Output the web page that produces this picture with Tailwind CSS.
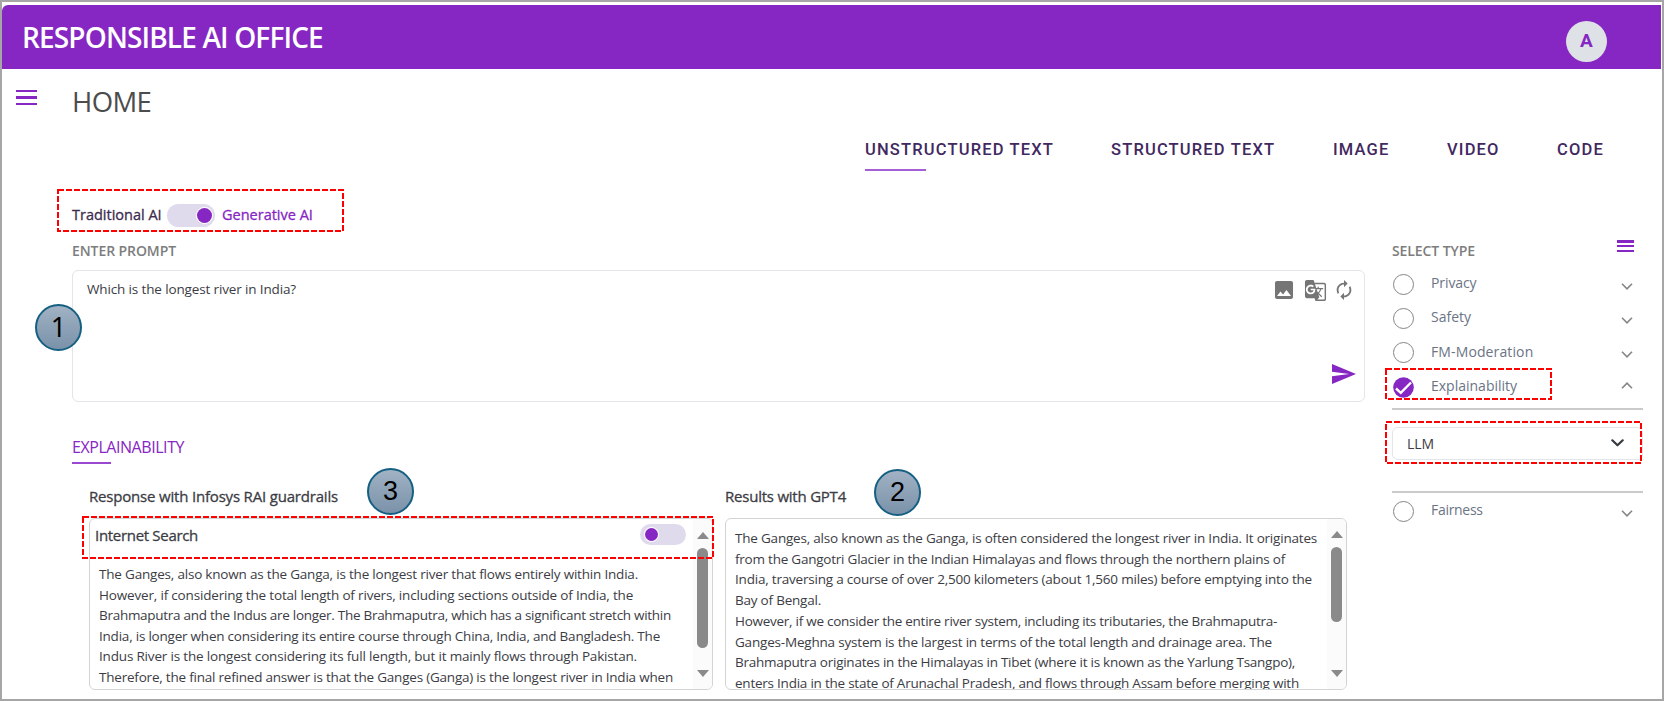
<!DOCTYPE html>
<html lang="en">
<head>
<meta charset="utf-8">
<title>Responsible AI Office</title>
<script src="https://cdn.jsdelivr.net/npm/@tailwindcss/browser@4"></script>
</head>
<body class="bg-white">
<div class="relative w-[1664px] h-[701px] overflow-hidden bg-white font-['Open_Sans',sans-serif] text-[#3c3c44] whitespace-nowrap">

  <div class="h-[5px]"></div>
  <header class="ml-[2px] mr-[3px] h-16 bg-[#8626c3] flex items-center justify-between rounded-tl-md pl-[20px] pr-[54px]">
    <h1 class="text-[28px] leading-8 font-semibold text-white tracking-[-0.85px]">RESPONSIBLE AI OFFICE</h1>
    <div class="size-[41px] mt-2 rounded-full bg-[#dee2e6] flex items-center justify-center font-[Roboto,sans-serif] font-bold text-[19px] text-[#8626c3]">A</div>
  </header>

  <div class="mt-[11px] h-10 flex items-center pl-4">
    <div class="w-[21px] -mt-[5px] flex flex-col gap-1">
      <span class="h-[2.5px] bg-[#8626c3]"></span><span class="h-[2.5px] bg-[#8626c3]"></span><span class="h-[2.5px] bg-[#8626c3]"></span>
    </div>
    <h2 class="ml-[35px] mt-[3px] text-[27.5px] leading-10 text-[#4c4c4c] font-normal tracking-[-0.6px]">HOME</h2>
  </div>

  <nav class="pt-[18px] h-[51px] pl-[865px] flex items-start font-[Roboto,sans-serif] font-medium text-[16.5px] leading-6 text-[#41285f] tracking-[1.17px]">
    <div class="w-[246px]">UNSTRUCTURED TEXT<div class="mt-[7px] w-[61px] h-[2px] bg-[#a45fd6]"></div></div>
    <div class="w-[222px]">STRUCTURED TEXT</div>
    <div class="w-[114px]">IMAGE</div>
    <div class="w-[110px]">VIDEO</div>
    <div>CODE</div>
  </nav>

  <div class="mt-8 h-6 flex items-center pl-[72px] text-[14.5px] [-webkit-text-stroke:0.3px]">
    <span class="w-[95px] text-[#3b2b4d]">Traditional AI</span>
    <span class="w-12 h-[23px] rounded-full bg-[#dfdbec] flex items-center justify-end pr-[3.5px]"><span class="size-[15px] rounded-full bg-[#8626c3] ring-1 ring-white"></span></span>
    <span class="ml-[7px] text-[#8626c3]">Generative AI</span>
  </div>

  <div class="flex pl-[72px]">
    <main class="w-[1293px]">
      <div class="mt-[14px] h-5 leading-5 text-[14px] font-semibold text-[#7d7d7d] tracking-[-0.09px]">ENTER PROMPT</div>
      <section class="mt-[9px] h-[132px] border-[1.5px] border-[#e2e5ea] rounded-md flex justify-between pl-[14px] pr-2">
        <p class="mt-2 leading-5 text-[13.5px] tracking-[-0.137px]">Which is the longest river in India?</p>
        <div class="flex flex-col items-end justify-between pt-[7px] pb-[17px]">
          <div class="flex items-center text-[#757575]">
            <svg class="size-[24px]" viewBox="0 0 24 24" fill="currentColor"><path d="M21 19V5c0-1.100-.9-2-2-2H5c-1.100 0-2 .9-2 2v14c0 1.100.9 2 2 2h14c1.100 0 2-.9 2-2zM8.500 13.500l2.500 3.010L14.500 12l4.500 6H5l3.500-4.500z"/></svg>
            <svg class="ml-2 size-[23px]" viewBox="0 0 24 24" fill="currentColor"><path d="M21 4H11l-1-3H3c-1.100 0-2 .9-2 2v15c0 1.100.9 2 2 2h8l1 3h9c1.100 0 2-.9 2-2V6c0-1.100-.9-2-2-2zM7 16c-2.760 0-5-2.240-5-5s2.240-5 5-5c1.350 0 2.480.5 3.350 1.300L9.030 8.570c-.38-.36-1.040-.78-2.030-.78-1.740 0-3.150 1.440-3.150 3.210S5.260 14.210 7 14.210c2.010 0 2.840-1.440 2.920-2.410H7v-1.710h4.680c.07.310.12.610.12 1.020C11.800 13.970 9.890 16 7 16zm6.170-5.420h3.700c-.43 1.250-1.110 2.430-2.050 3.470-.31-.35-.6-.72-.86-1.100l-.79-2.370zm8.330 9.920c0 .55-.45 1-1 1H14l2-2.500-1.040-3.100 3.100 3.100.92-.92-3.300-3.250.02-.02c1.130-1.250 1.930-2.690 2.400-4.220H20v-1.300h-4.530V8h-1.290v1.290h-1.440L11.460 5.500h9.040c.55 0 1 .45 1 1v14z"/></svg>
            <svg class="ml-[6px] mr-px size-[22px]" viewBox="0 0 24 24" fill="currentColor"><path d="M12 6v3l4-4-4-4v3c-4.420 0-8 3.580-8 8 0 1.570.46 3.030 1.240 4.260L6.700 14.800c-.45-.83-.7-1.790-.7-2.800 0-3.310 2.690-6 6-6zm6.760 1.740L17.300 9.200c.44.84.7 1.790.7 2.800 0 3.310-2.690 6-6 6v-3l-4 4 4 4v-3c4.420 0 8-3.580 8-8 0-1.570-.46-3.030-1.240-4.260z"/></svg>
          </div>
          <svg class="w-[24px] h-[20px]" viewBox="2 3 21 18" preserveAspectRatio="none" fill="#8626c3"><path d="M2.010 21L23 12 2.010 3 2 10l15 2-15 2z"/></svg>
        </div>
      </section>

      <h3 class="mt-[33px] leading-6 text-[16px] text-[#8626c3] tracking-[-0.446px]">EXPLAINABILITY</h3>
      <div class="mt-[3px] w-[39px] h-[2px] bg-[#9a48cf]"></div>

      <div class="mt-5 flex">
        <section class="ml-[17px] w-[624px] shrink-0">
          <h4 class="leading-6 text-[15px] [-webkit-text-stroke:0.3px] tracking-[-0.187px]">Response with Infosys RAI guardrails</h4>
          <div class="mt-[10px] h-[172px] border-[1.5px] border-[#d3d3d3] rounded-md flex justify-between overflow-hidden">
            <div class="pl-1">
              <div class="pt-1 flex items-start w-[592px] justify-between">
                <span class="pl-[1px] leading-6 text-[15px] [-webkit-text-stroke:0.3px] tracking-[-0.31px]">Internet Search</span>
                <span class="mt-[1px] w-[46px] h-[21px] rounded-full bg-[#dfdbec] flex items-center pl-[5px]"><span class="size-[13px] rounded-full bg-[#8626c3] ring-1 ring-white"></span></span>
              </div>
              <div class="mt-[17px] pl-[5px] text-[13.5px] leading-[20.6px]">
                <p class="tracking-[-0.197px]">The Ganges, also known as the Ganga, is the longest river that flows entirely within India.</p>
                <p class="tracking-[-0.174px]">However, if considering the total length of rivers, including sections outside of India, the</p>
                <p class="tracking-[-0.283px]">Brahmaputra and the Indus are longer. The Brahmaputra, which has a significant stretch within</p>
                <p class="tracking-[-0.218px]">India, is longer when considering its entire course through China, India, and Bangladesh. The</p>
                <p class="tracking-[-0.177px]">Indus River is the longest considering its full length, but it mainly flows through Pakistan.</p>
                <p class="tracking-[-0.212px]">Therefore, the final refined answer is that the Ganges (Ganga) is the longest river in India when</p>
              </div>
            </div>
            <div class="w-[19px] shrink-0 bg-[#fbfbfb] flex flex-col items-center pt-[13px] pb-[12px]">
              <svg class="w-3 h-[7px]" viewBox="0 0 12 7" fill="#8a8a8a"><path d="M6 0L12 7H0z"/></svg>
              <span class="mt-[9px] w-[11px] h-[100px] rounded-full bg-[#8a8a8a]"></span>
              <svg class="mt-auto w-3 h-[7px]" viewBox="0 0 12 7" fill="#8a8a8a"><path d="M0 0H12L6 7z"/></svg>
            </div>
          </div>
        </section>

        <section class="ml-3 w-[622px] shrink-0">
          <h4 class="leading-6 text-[15px] [-webkit-text-stroke:0.3px] tracking-[-0.225px]">Results with GPT4</h4>
          <div class="mt-[10px] h-[172px] border-[1.5px] border-[#d3d3d3] rounded-md flex justify-between overflow-hidden">
            <div class="pl-[9px] pt-[9px] text-[13.5px] leading-[20.7px]">
                <p class="tracking-[-0.204px]">The Ganges, also known as the Ganga, is often considered the longest river in India. It originates</p>
                <p class="tracking-[-0.227px]">from the Gangotri Glacier in the Indian Himalayas and flows through the northern plains of</p>
                <p class="tracking-[-0.206px]">India, traversing a course of over 2,500 kilometers (about 1,560 miles) before emptying into the</p>
                <p class="tracking-[-0.217px]">Bay of Bengal.</p>
                <p class="tracking-[-0.265px]">However, if we consider the entire river system, including its tributaries, the Brahmaputra-</p>
                <p class="tracking-[-0.192px]">Ganges-Meghna system is the largest in terms of the total length and drainage area. The</p>
                <p class="tracking-[-0.254px]">Brahmaputra originates in the Himalayas in Tibet (where it is known as the Yarlung Tsangpo),</p>
                <p class="tracking-[-0.233px]">enters India in the state of Arunachal Pradesh, and flows through Assam before merging with</p>
            </div>
            <div class="w-[19px] shrink-0 bg-[#fbfbfb] flex flex-col items-center pt-[12px] pb-[12px]">
              <svg class="w-3 h-[7px]" viewBox="0 0 12 7" fill="#8a8a8a"><path d="M6 0L12 7H0z"/></svg>
              <span class="mt-[9px] w-[11px] h-[75px] rounded-full bg-[#8a8a8a]"></span>
              <svg class="mt-auto w-3 h-[7px]" viewBox="0 0 12 7" fill="#8a8a8a"><path d="M0 0H12L6 7z"/></svg>
            </div>
          </div>
        </section>
      </div>
    </main>

    <aside class="ml-[27px] w-[251px] text-[14px] text-[#6b7485]">
      <div class="mt-[14px] h-5 flex justify-between font-semibold text-[#7d7d7d] leading-5">
        <span class="tracking-[-0.088px]">SELECT TYPE</span>
        <div class="mr-[9px] -mt-[1px] w-[17px] flex flex-col gap-[2.5px]"><span class="h-[2.500px] bg-[#8626c3]"></span><span class="h-[2px] bg-[#8626c3]"></span><span class="h-[2.500px] bg-[#8626c3]"></span></div>
      </div>
      <div class="mt-[6px] h-[34.400px] flex items-center"><span class="ml-px size-[21px] rounded-full border-[1.5px] border-[#858585]"></span><span class="ml-[17px] -mt-1 tracking-[-0.1px]">Privacy</span><svg class="ml-auto mr-[10px] mt-1 w-3 h-[7px]" viewBox="0 0 12 7" fill="none" stroke="#858585" stroke-width="1.600"><path d="M1 .8l5 5 5-5"/></svg></div>
      <div class="h-[34.400px] flex items-center"><span class="ml-px size-[21px] rounded-full border-[1.5px] border-[#858585]"></span><span class="ml-[17px] -mt-1">Safety</span><svg class="ml-auto mr-[10px] mt-1 w-3 h-[7px]" viewBox="0 0 12 7" fill="none" stroke="#858585" stroke-width="1.600"><path d="M1 .8l5 5 5-5"/></svg></div>
      <div class="h-[34.400px] flex items-center"><span class="ml-px size-[21px] rounded-full border-[1.5px] border-[#858585]"></span><span class="ml-[17px] -mt-[3px] tracking-[0.12px]">FM-Moderation</span><svg class="ml-auto mr-[10px] mt-1 w-3 h-[7px]" viewBox="0 0 12 7" fill="none" stroke="#858585" stroke-width="1.600"><path d="M1 .8l5 5 5-5"/></svg></div>
      <div class="h-[34.400px] flex items-center"><svg class="ml-px size-[21px]" viewBox="0 0 21 21"><circle cx="10.5" cy="10.5" r="10.300" fill="#8626c3"/><path d="M3 11.500l4.800 4.300L18 5.500" fill="none" stroke="#fff" stroke-width="2.400"/></svg><span class="ml-[17px] -mt-[3px]">Explainability</span><svg class="ml-auto mr-[10px] -mt-1 w-3 h-[7px]" viewBox="0 0 12 7" fill="none" stroke="#858585" stroke-width="1.600"><path d="M1 6.200l5-5 5 5"/></svg></div>
      <div class="mt-[3px] border-t-2 border-[#cacaca]"></div>
      <div class="mt-[17px] h-[33px] border border-[#e2e5ea] rounded-md flex items-center justify-between pl-[14px] pr-[18px] text-[#3c3c44]"><span>LLM</span><svg class="-mt-px w-[13px] h-[8px]" viewBox="0 0 13 8" fill="none" stroke="#343a40" stroke-width="2.200" stroke-linecap="round" stroke-linejoin="round"><path d="M1.300 1.300l5.200 5 5.200-5"/></svg></div>
      <div class="mt-[31px] border-t-2 border-[#cacaca]"></div>
      <div class="mt-[2px] h-[34.400px] flex items-center"><span class="ml-px size-[21px] rounded-full border-[1.5px] border-[#858585]"></span><span class="ml-[17px] -mt-1 tracking-[-0.3px]">Fairness</span><svg class="ml-auto mr-[10px] mt-1 w-3 h-[7px]" viewBox="0 0 12 7" fill="none" stroke="#858585" stroke-width="1.600"><path d="M1 .8l5 5 5-5"/></svg></div>
    </aside>
  </div>

  <!-- window frame -->
  <div class="absolute inset-0 border-2 border-[#a6a6a6]"></div>

  <!-- dashed highlights -->
  <svg class="absolute inset-0" width="1664" height="701" fill="none" stroke="#fe0000" stroke-width="2" stroke-dasharray="6 2">
    <rect x="58" y="190" width="285" height="41"/>
    <rect x="1386" y="369" width="165" height="30"/>
    <rect x="1386" y="422" width="255" height="41"/>
    <rect x="83" y="517" width="630" height="41"/>
  </svg>

  <!-- numbered callouts -->
  <div class="absolute left-[35px] top-[304px] size-[47px] rounded-full border-2 border-[#156082] bg-linear-to-b from-[#a1b2c4] to-[#7a92a9] flex items-center justify-center font-['Noto_Sans',sans-serif] text-[27px] text-black">1</div>
  <div class="absolute left-[367px] top-[468px] size-[47px] rounded-full border-2 border-[#156082] bg-linear-to-b from-[#a1b2c4] to-[#7a92a9] flex items-center justify-center font-['Liberation_Sans',sans-serif] text-[27px] text-black">3</div>
  <div class="absolute left-[874px] top-[469px] size-[47px] rounded-full border-2 border-[#156082] bg-linear-to-b from-[#a1b2c4] to-[#7a92a9] flex items-center justify-center font-['Liberation_Sans',sans-serif] text-[27px] text-black">2</div>
</div>
</body>
</html>
